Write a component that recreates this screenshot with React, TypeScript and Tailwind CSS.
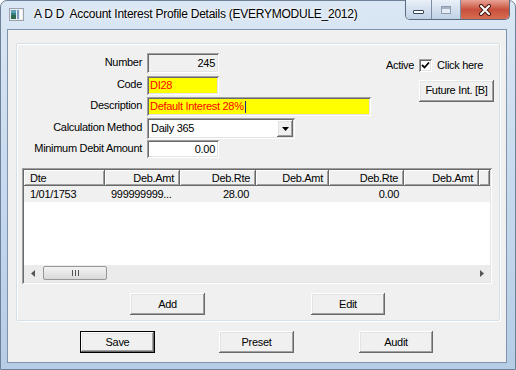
const raised =
  "bg-[#f0f0f0] shadow-[inset_-1px_-1px_0_#696969,inset_1px_1px_0_#ffffff,inset_-2px_-2px_0_#a0a0a0,inset_2px_2px_0_#e3e3e3]";
const sunken =
  "shadow-[inset_1px_1px_0_#a0a0a0,inset_-1px_-1px_0_#ffffff,inset_2px_2px_0_#696969,inset_-2px_-2px_0_#e3e3e3]";
const headCell =
  "shrink-0 h-full flex items-center bg-[#f0f0f0] shadow-[inset_-1px_-1px_0_#696969,inset_1px_1px_0_#ffffff,inset_-2px_-2px_0_#a0a0a0]";

const Button = ({ label, w = 75, primary = false }: { label: string; w?: number; primary?: boolean }) => (
  <div
    className={`h-[22px] flex items-center justify-center text-black ${primary ? "border border-black" : ""} ${raised}`}
    style={{ width: w }}
  >
    {label}
  </div>
);

const Row = ({ label, children, h, mt }: { label: string; children: React.ReactNode; h: number; mt: number }) => (
  <div className="flex items-center" style={{ height: h, marginTop: mt }}>
    <div className="w-[126px] pr-px text-right pb-[2px] text-black">{label}</div>
    <div className="ml-[4px] h-full flex">{children}</div>
  </div>
);

const TitleIcon = () => (
  <svg width="15" height="13" viewBox="0 0 15 13">
    <rect x="0.5" y="0.5" width="14" height="12" fill="#e9ecef" stroke="#9aa3ab" />
    <rect x="2" y="2" width="5" height="9" fill="#3b7f86" />
    <rect x="2" y="2" width="5" height="3" fill="#5fa3b8" />
    <rect x="2" y="7" width="5" height="4" fill="#2f6b4f" />
    <rect x="8" y="2" width="2" height="9" fill="#7fa0c4" />
    <rect x="11" y="2" width="2" height="9" fill="#ffffff" />
  </svg>
);

const CaptionButtons = () => (
  <div className="flex h-[20px] -mt-px -mr-[3px] rounded-b-[5px] border border-t-0 border-[#5a6a80] overflow-hidden">
    <div className="w-[26px] h-full flex items-center justify-center bg-gradient-to-b from-[#e9f0f8] via-[#d4e0ee] to-[#c0d2e6] border-r border-[#7d8ea4]">
      <div className="w-[11px] h-[4px] mt-[5px] bg-white border border-[#36455a] rounded-[1px]" />
    </div>
    <div className="w-[29px] h-full flex items-center justify-center bg-gradient-to-b from-[#e9f0f8] via-[#d4e0ee] to-[#c0d2e6] border-r border-[#7d8ea4]">
      <div className="w-[10px] h-[8px] border border-[#8d9bb0] bg-[#e4ebf4] shadow-[inset_0_2px_0_#a7b3c4]" />
    </div>
    <div className="w-[48px] h-full flex items-center justify-center bg-gradient-to-b from-[#e8a396] via-[#c8503c] to-[#d86b52]">
      <svg width="14" height="12" viewBox="0 0 14 12">
        <path d="M3 2 L11 10 M11 2 L3 10" stroke="#4a1c14" strokeWidth="4" strokeLinecap="round" />
        <path d="M3 2 L11 10 M11 2 L3 10" stroke="#ffffff" strokeWidth="2" strokeLinecap="round" />
      </svg>
    </div>
  </div>
);

const cols = [
  { head: "Dte", w: 81, left: true },
  { head: "Deb.Amt", w: 75 },
  { head: "Deb.Rte", w: 76 },
  { head: "Deb.Amt", w: 73 },
  { head: "Deb.Rte", w: 75 },
  { head: "Deb.Amt", w: 75 },
];

const ListView = () => (
  <div className={`ml-[5px] mt-[10px] w-[470px] h-[116px] p-[2px] bg-white flex flex-col ${sunken}`}>
    <div className="flex h-[16px]">
      {cols.map((c, i) => (
        <div
          key={i}
          className={`${headCell} ${c.left ? "justify-start pl-[6px]" : "justify-end pr-[6px]"}`}
          style={{ width: c.w }}
        >
          {c.head}
        </div>
      ))}
      <div className={`${headCell} flex-1`} />
    </div>
    <div className="flex-1 bg-white">
      <div className="flex h-[16px] items-center bg-[#f0f0f0]">
        <div className="w-[81px] pl-[6px]">1/01/1753</div>
        <div className="w-[75px] pl-[6px] truncate">999999999...</div>
        <div className="w-[76px] text-right pr-[7px]">28.00</div>
        <div className="w-[73px]" />
        <div className="w-[75px] text-right pr-[5px]">0.00</div>
      </div>
    </div>
    <div className="h-[17px] flex bg-[#ebebeb]">
      <div className="w-[17px] flex items-center justify-center">
        <svg width="4" height="7" viewBox="0 0 4 7">
          <path d="M4 0 L0 3.5 L4 7 Z" fill="#555" />
        </svg>
      </div>
      <div className="ml-[2px] mt-px w-[64px] h-[14px] rounded-[2px] border border-[#979797] bg-gradient-to-b from-[#f3f3f3] to-[#d9d9d9] flex items-center justify-center gap-[1px]">
        <div className="w-px h-[6px] bg-[#555]" />
        <div className="w-px h-[6px] bg-[#555] ml-[1px]" />
        <div className="w-px h-[6px] bg-[#555] ml-[1px]" />
      </div>
      <div className="flex-1" />
      <div className="w-[17px] flex items-center justify-center">
        <svg width="4" height="7" viewBox="0 0 4 7">
          <path d="M0 0 L4 3.5 L0 7 Z" fill="#555" />
        </svg>
      </div>
    </div>
  </div>
);

export default function App() {
  return (
    <div className="w-[516px] h-[370px] bg-white font-['Liberation_Sans',Arial,sans-serif] text-[11px] tracking-[-0.3px] text-black">
      <div className="w-full h-full flex flex-col rounded-t-[7px] border border-[#6e8196] bg-gradient-to-b from-[#dbe7f4] via-[#c6d9ee] to-[#b6cde6] pl-[6px] pr-[8px] pb-[6px]">
        {/* title bar */}
        <div className="h-[28px] flex items-start justify-between">
          <div className="flex items-center h-[26px] pl-[2px]">
            <TitleIcon />
            <span className="ml-[10px] text-[12px] tracking-[-0.25px] text-black [text-shadow:0_0_6px_#ffffff,0_0_3px_#ffffff]">
              A D D&nbsp; Account Interest Profile Details (EVERYMODULE_2012)
            </span>
          </div>
          <CaptionButtons />
        </div>

        {/* client area */}
        <div className="flex-1 border border-[#7f93aa] bg-[#f0f0f0] flex flex-col">
          <div className="mt-[13px] ml-[8px] mr-[6px] h-[278px] border border-[#d5dfe5] rounded-[2px] shadow-[inset_1px_1px_0_#ffffff,1px_1px_0_#ffffff] flex flex-col pt-[9px] pb-[5px]">
            <div className="flex justify-between">
              <div className="flex flex-col">
                <Row label="Number" h={20} mt={0}>
                  <div className={`w-[72px] h-full flex items-center justify-end pr-[4px] bg-[#f0f0f0] ${sunken}`}>245</div>
                </Row>
                <Row label="Code" h={19} mt={3}>
                  <div className={`w-[72px] h-full flex items-center pl-[3px] bg-[#ffff00] text-[#ff0000] ${sunken}`}>DI28</div>
                </Row>
                <Row label="Description" h={19} mt={2}>
                  <div className={`w-[224px] h-full flex items-center pl-[3px] bg-[#ffff00] text-[#ff0000] ${sunken}`}>
                    Default Interest 28%
                    <span className="inline-block w-px h-[12px] bg-[#1a2a8a] ml-px" />
                  </div>
                </Row>
                <Row label="Calculation Method" h={21} mt={2}>
                  <div className={`w-[148px] h-full flex items-stretch p-[2px] bg-white ${sunken}`}>
                    <div className="flex-1 flex items-center pl-[2px]">Daily 365</div>
                    <div className={`w-[16px] flex items-center justify-center ${raised}`}>
                      <svg width="7" height="4" viewBox="0 0 7 4">
                        <path d="M0 0 L7 0 L3.5 4 Z" fill="#000" />
                      </svg>
                    </div>
                  </div>
                </Row>
                <Row label="Minimum Debit Amount" h={18} mt={1}>
                  <div className={`w-[72px] h-full flex items-center justify-end pr-[4px] bg-white ${sunken}`}>0.00</div>
                </Row>
              </div>

              <div className="flex flex-col items-end pr-[5px]">
                <div className="mt-[4px] flex items-center pr-[11px]">
                  <span>Active</span>
                  <div className={`ml-[5px] w-[13px] h-[13px] bg-white flex items-center justify-center ${sunken}`}>
                    <svg width="9" height="9" viewBox="0 0 9 9">
                      <path d="M1 4 L3.5 6.5 L8 1.5" stroke="#000" strokeWidth="1.8" fill="none" />
                    </svg>
                  </div>
                  <span className="ml-[5px]">Click here</span>
                </div>
                <div className="mt-[6px]">
                  <Button label="Future Int. [B]" w={75} />
                </div>
              </div>
            </div>

            <ListView />

            <div className="flex mt-[9px] ml-[113px] gap-[106px]">
              <Button label="Add" />
              <Button label="Edit" w={74} />
            </div>
          </div>

          <div className="flex mt-[10px] ml-[72px] gap-[65px]">
            <Button label="Save" primary />
            <div className="-ml-px">
              <Button label="Preset" />
            </div>
            <Button label="Audit" w={74} />
          </div>
        </div>
      </div>
    </div>
  );
}
